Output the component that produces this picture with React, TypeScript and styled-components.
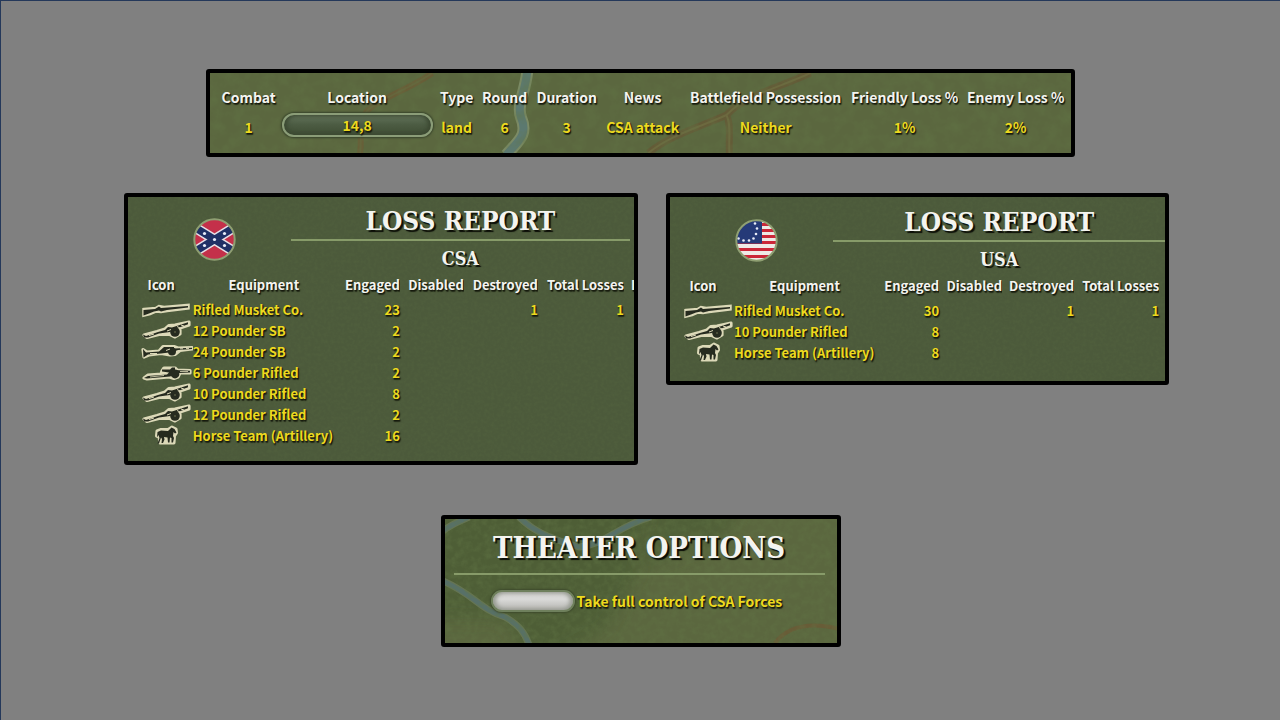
import React from 'react';
import styled, { createGlobalStyle } from 'styled-components';

const GlobalStyle = createGlobalStyle`
  *, *::before, *::after { box-sizing: border-box; }
  body {
    margin: 0;
    background: #808080;
    font-family: 'Noto Sans CJK SC', 'Open Sans', sans-serif;
    font-weight: 700;
    color: #f4f4f0;
  }
`;

const Page = styled.main`
  min-height: 100vh;
  padding: 68px 0 40px;
  border-top: 1px solid #24385a;
  border-left: 1px solid #24385a;
  display: flex;
  flex-direction: column;
  align-items: center;
`;

const Panel = styled.section<{ $map?: boolean }>`
  position: relative;
  overflow: hidden;
  border: 4px solid #000;
  border-radius: 3px;
  background: ${(p) => (p.$map ? '#5b673f' : '#4c5a3b')};
  text-shadow: 1px 1px 1px #14180c, 1px 2px 1px rgba(20, 24, 12, 0.7);
`;

const CombatPanel = styled(Panel)`
  width: 68%;
  min-width: 869px;
  padding: 10px 0 13px 7px;
`;

const Reports = styled.div`
  width: 83%;
  min-width: 1061px;
  margin: 36px 0 50px;
  padding: 0 2px 0 14px;
  display: grid;
  grid-template-columns: 514fr 503fr;
  gap: 28px;
  align-items: start;
`;

const ReportPanel = styled(Panel)<{ $top: number; $bottom: number }>`
  padding: ${(p) => p.$top}px 0 ${(p) => p.$bottom}px 2px;
`;

const OptionsPanel = styled(Panel)`
  width: 400px;
  padding: 12px 12px 30px 9px;
`;

const Backdrop = styled.svg`
  position: absolute;
  inset: 0;
  width: 100%;
  height: 100%;
`;

const Table = styled.table`
  position: relative;
  width: 100%;
  table-layout: fixed;
  border-collapse: collapse;
  white-space: nowrap;
`;

const CombatHead = styled.th`
  height: 27px;
  padding: 0;
  font-size: 14px;
  line-height: 24px;
  text-align: center;
`;

const CombatCell = styled.td`
  height: 30px;
  padding: 4px 0 0;
  font-size: 14px;
  line-height: 24px;
  text-align: center;
  color: #edd91f;
`;

const LocationCell = styled(CombatCell)`
  padding: 0 1px;
`;

const LocationButton = styled.button`
  display: block;
  width: 100%;
  height: 24px;
  padding: 0;
  border: 2px solid #8b9d78;
  border-radius: 12px;
  background: linear-gradient(#63735b, #4d5d44 45%, #3f4d34);
  box-shadow: 0 0 2px 1px #37432a, inset 3px 0 4px #3c4932, inset -3px 0 4px #3c4932;
  font: inherit;
  line-height: 18px;
  color: inherit;
  text-shadow: inherit;
`;

const ReportHeader = styled.header`
  position: relative;
  display: flex;
`;

const Flag = styled.svg`
  flex: none;
  width: 43px;
  height: 43px;
  margin: 13px 55px 0 63px;
`;

const Titles = styled.div<{ $inset: number }>`
  flex: 1;
  margin-right: ${(p) => p.$inset}px;
  text-align: center;
  font-family: 'DejaVu Serif Condensed', 'DejaVu Serif', serif;
  text-shadow: 2px 2px 1px #0b0d06;
`;

const Title = styled.h2`
  margin: 0;
  padding-bottom: 2px;
  border-bottom: 2px solid #879b69;
  font-size: 26px;
  line-height: 32px;
`;

const Side = styled.h3`
  margin: 0;
  padding-top: 4px;
  font-size: 18px;
  line-height: 28px;
`;

const HeadCell = styled.th<{ $align?: string }>`
  height: 26px;
  padding: 0;
  overflow: hidden;
  vertical-align: top;
  font-size: 13px;
  line-height: 24px;
  text-align: ${(p) => p.$align ?? 'right'};
`;

const CutHeadCell = styled(HeadCell)`
  padding-left: 7px;
  text-align: left;
`;

const Cell = styled.td<{ $align?: string }>`
  height: 21px;
  padding: 0;
  font-size: 13px;
  line-height: 21px;
  text-align: ${(p) => p.$align ?? 'right'};
  color: #edd91f;
`;

const UnitIcon = styled.svg`
  display: block;
  width: 54px;
  height: 21px;
  margin-left: 9px;
`;

const OptionsTitle = styled.h2`
  position: relative;
  margin: 0;
  padding-bottom: 8px;
  border-bottom: 2px solid #879b69;
  font-family: 'DejaVu Serif Condensed', 'DejaVu Serif', serif;
  font-size: 29px;
  line-height: 34px;
  text-align: center;
  text-shadow: 2px 2px 1px #0b0d06;
`;

const Option = styled.label`
  position: relative;
  display: flex;
  align-items: center;
  gap: 2px;
  margin: 14px 0 0 37px;
  font-size: 14px;
  line-height: 24px;
  color: #edd91f;
`;

const Toggle = styled.input`
  appearance: none;
  width: 84px;
  height: 22px;
  margin: 0;
  border: 2px solid #6f805d;
  border-radius: 11px;
  background: linear-gradient(#cfcfcd, #dadad8 40%, #b4b4b1);
  box-shadow: 0 0 2px 1px #3d4a2c, inset 3px 0 4px #969a90, inset -3px 0 4px #969a90;
`;

type UnitKind = 'musket' | 'cannonUp' | 'cannonLong' | 'cannonLow' | 'horse';

const CREAM = '#dcd9b8';
const INK = '#262b1f';

const unitShapes: Record<UnitKind, React.ReactNode> = {
  musket: (
    <>
      <path d="M5 10.500L17 9.500L20 7.500L25 8.500L49 6.500V9L28 11.500L22 12.500L17 12L11 14.500L5 16Z" stroke={CREAM} strokeWidth="3.500" fill={CREAM} />
      <path d="M4.500 11L16 10L20 7.500L22 9L49 7V8.500L28 11L22 12.500L20 11.500L15 12.500L10 14.500L4.500 16.500Z" fill={INK} />
    </>
  ),
  cannonUp: (
    <>
      <path d="M5 15L18 11.500L26 9L30 5.500L36 5L50 2V5L41 8L41 14L36 17L31 14.500L20 14.500L8 17.500Z" stroke={CREAM} strokeWidth="3.200" strokeLinejoin="round" fill={CREAM} />
      <path d="M4 14.500L7 16L19 12L26 10L29 7L33 7.500L49 2.300V4.300L39 8L31 12L20 13.500L9 17.500L5 17.500Z" fill={INK} />
      <circle cx="36" cy="12" r="4.800" fill={INK} />
      <path d="M38 6.500l3 1.500M42 5l3 1M10 15.500l5-1.500M28 11l4-1.500" stroke={CREAM} strokeWidth="1" />
      <circle cx="36" cy="12" r="1" fill="#55583f" />
    </>
  ),
  cannonLong: (
    <>
      <path d="M4 8.500L8 11L20 10L24 5.500H35L39 7L53 6.500V8L41 9.500L36 13.500L31 14L22 12.500L10 14L5 16Z" stroke={CREAM} strokeWidth="3.200" strokeLinejoin="round" fill={CREAM} />
      <path d="M4 8L7 11.500L20 10.500L25 6H35V7.500L53 6.800V8L39 9L34 11L22 12.500L9 13.500L4.500 16.500Z" fill={INK} />
      <circle cx="33" cy="10.500" r="4" fill={INK} />
      <path d="M41 7.800h3M47 7.400h3M11 12.500h7M27 9.500l4-1.500" stroke={CREAM} strokeWidth="1" />
    </>
  ),
  cannonLow: (
    <>
      <path d="M5 16L9 13L22 12L23 9L25 6H36L38 8L51 8.500V11H41L39 15L35 16.500L30 15L8 17Z" stroke={CREAM} strokeWidth="3.200" strokeLinejoin="round" fill={CREAM} />
      <path d="M5 16L9 14L28 12.500L30 10.500L23 9.500V7.500H31L33 5.500H36V8L51 8.800V10.500L40 11L31 14.500L8 16.500Z" fill={INK} />
      <circle cx="36" cy="12" r="4.400" fill={INK} />
      <path d="M11 15l14-1.500M41 9.500h8" stroke={CREAM} strokeWidth="0.800" />
    </>
  ),
  horse: (
    <>
      <path d="M18 6L22 4.500L29 4.500L33 2L37 4L37.500 8L35.500 11L35 18H21L20 12L17.500 11Z" stroke={CREAM} strokeWidth="3" strokeLinejoin="round" fill={CREAM} />
      <path d="M18.500 7L22 5.500L29 6L32.500 2.500L35.500 4L37.500 7.500L36 8.500L34.500 7L34 11L35 13L34 17.500H32.500L32.500 13L31 12.500L30.500 17.500H29L28.500 12.500L25 12L25.500 14.500L24 18H22.500L23 14L22 12.500L20 18.500H18.500L20.500 13L19.500 10L18 12.500Z" fill={INK} />
    </>
  ),
};

interface LossRow {
  unit: UnitKind;
  name: string;
  engaged: number;
  destroyed?: number;
  total?: number;
}

const csaRows: LossRow[] = [
  { unit: 'musket', name: 'Rifled Musket Co.', engaged: 23, destroyed: 1, total: 1 },
  { unit: 'cannonUp', name: '12 Pounder SB', engaged: 2 },
  { unit: 'cannonLong', name: '24 Pounder SB', engaged: 2 },
  { unit: 'cannonLow', name: '6 Pounder Rifled', engaged: 2 },
  { unit: 'cannonUp', name: '10 Pounder Rifled', engaged: 8 },
  { unit: 'cannonUp', name: '12 Pounder Rifled', engaged: 2 },
  { unit: 'horse', name: 'Horse Team (Artillery)', engaged: 16 },
];

const usaRows: LossRow[] = [
  { unit: 'musket', name: 'Rifled Musket Co.', engaged: 30, destroyed: 1, total: 1 },
  { unit: 'cannonUp', name: '10 Pounder Rifled', engaged: 8 },
  { unit: 'horse', name: 'Horse Team (Artillery)', engaged: 8 },
];

function Grain({ id, strength, frequency }: { id: string; strength: number; frequency: number }) {
  return (
    <>
      <filter id={id} x="0" y="0" width="100%" height="100%">
        <feTurbulence type="fractalNoise" baseFrequency={frequency} numOctaves="4" seed="4" />
        <feColorMatrix values={`0 0 0 0 0.12  0 0 0 0 0.18  0 0 0 0 0.06  0 ${strength} 0 0 ${-strength * 0.38}`} />
      </filter>
      <rect width="100%" height="100%" filter={`url(#${id})`} />
    </>
  );
}

function CsaFlag() {
  const stars = [[11.5, 15.5], [31.5, 15.5], [21.5, 21.5], [11.5, 27.5], [31.5, 27.5]];
  return (
    <Flag viewBox="0 0 43 43" role="img" aria-label="CSA flag">
      <clipPath id="csa-clip"><circle cx="21.500" cy="21.500" r="20" /></clipPath>
      <g clipPath="url(#csa-clip)">
        <rect width="43" height="43" fill="#c4304a" />
        <path d="M-2 7L45 36M45 7L-2 36" stroke="#e6dfe6" strokeWidth="10.500" />
        <path d="M-2 7L45 36M45 7L-2 36" stroke="#203066" strokeWidth="7.500" />
        {stars.map(([x, y]) => <circle key={`${x}-${y}`} cx={x} cy={y} r="1.600" fill="#e8ecf8" />)}
      </g>
      <circle cx="21.500" cy="21.500" r="20.200" fill="none" stroke="#8f9f72" strokeWidth="2" />
    </Flag>
  );
}

function UsaFlag() {
  const stars = [[20, 4.5], [22, 9.5], [21, 15], [18.5, 19.5], [14, 21.500], [8.5, 21.500], [3.5, 19.5]];
  return (
    <Flag viewBox="0 0 43 43" role="img" aria-label="USA flag">
      <clipPath id="usa-clip"><circle cx="21.500" cy="21.500" r="20" /></clipPath>
      <g clipPath="url(#usa-clip)">
        <rect width="43" height="43" fill="#efe9e6" />
        {[4, 10, 16, 22, 29, 36].map((y) => <rect key={y} y={y} width="43" height="3" fill="#cb2638" />)}
        <rect width="27" height="24.500" fill="#253a78" />
        {stars.map(([x, y]) => <circle key={`${x}-${y}`} cx={x} cy={y} r="1.300" fill="#e8ecf8" />)}
      </g>
      <circle cx="21.500" cy="21.500" r="20.200" fill="none" stroke="#8f9f72" strokeWidth="2" />
    </Flag>
  );
}

interface ReportProps {
  side: string;
  flag: React.ReactNode;
  rows: LossRow[];
  columns: number[];
  top: number;
  bottom: number;
  inset: number;
  more?: string;
}

function LossReport({ side, flag, rows, columns, top, bottom, inset, more }: ReportProps) {
  return (
    <ReportPanel $top={top} $bottom={bottom}>
      <Backdrop aria-hidden="true"><Grain id={`grain-${side}`} strength={0.35} frequency={0.3} /></Backdrop>
      <ReportHeader>
        {flag}
        <Titles $inset={inset}>
          <Title>LOSS REPORT</Title>
          <Side>{side}</Side>
        </Titles>
      </ReportHeader>
      <Table>
        <colgroup>{columns.map((w, i) => <col key={i} width={w} />)}</colgroup>
        <thead>
          <tr>
            <HeadCell $align="center">Icon</HeadCell>
            <HeadCell $align="center">Equipment</HeadCell>
            <HeadCell>Engaged</HeadCell>
            <HeadCell>Disabled</HeadCell>
            <HeadCell>Destroyed</HeadCell>
            <HeadCell>Total Losses</HeadCell>
            {more ? <CutHeadCell>{more}</CutHeadCell> : <HeadCell />}
          </tr>
        </thead>
        <tbody>
          {rows.map((row) => (
            <tr key={row.name}>
              <Cell><UnitIcon viewBox="0 0 54 21" fill="none" aria-hidden="true">{unitShapes[row.unit]}</UnitIcon></Cell>
              <Cell $align="left">{row.name}</Cell>
              <Cell>{row.engaged}</Cell>
              <Cell />
              <Cell>{row.destroyed}</Cell>
              <Cell>{row.total}</Cell>
              <Cell />
            </tr>
          ))}
        </tbody>
      </Table>
    </ReportPanel>
  );
}

const combatColumns = [64, 153, 46, 50, 74, 78, 168, 110, 112];
const combatHeads = ['Combat', 'Location', 'Type', 'Round', 'Duration', 'News', 'Battlefield Possession', 'Friendly Loss %', 'Enemy Loss %'];
const combatValues = ['land', '6', '3', 'CSA attack', 'Neither', '1%', '2%'];

export default function App() {
  return (
    <>
      <GlobalStyle />
      <Page>
        <CombatPanel $map>
          <Backdrop viewBox="0 0 861 80" preserveAspectRatio="none" fill="none" aria-hidden="true">
            <path d="M222 0C200 16 168 26 157 38C148 48 152 62 150 80" stroke="#6d5a35" strokeWidth="6" opacity="0.700" />
            <path d="M222 0C200 16 168 26 157 38C148 48 152 62 150 80" stroke="#66653c" strokeWidth="2" />
            <path d="M600 0C560 18 535 22 516 42C490 54 460 62 438 80M516 42C521 52 518 64 519 80" stroke="#665734" strokeWidth="7" opacity="0.700" />
            <path d="M600 0C560 18 535 22 516 42C490 54 460 62 438 80M516 42C521 52 518 64 519 80" stroke="#6c693f" strokeWidth="2" />
            <path d="M317 -2C315 20 306 32 311 45C318 62 308 68 296 82" stroke="#7c8b66" strokeWidth="12" />
            <path d="M317 -2C315 20 306 32 311 45C318 62 308 68 296 82" stroke="#5c7970" strokeWidth="8" />
            <Grain id="grain-combat" strength={0.9} frequency={0.08} />
          </Backdrop>
          <Table>
            <colgroup>{combatColumns.map((w, i) => <col key={i} width={w} />)}</colgroup>
            <thead>
              <tr>{combatHeads.map((h) => <CombatHead key={h}>{h}</CombatHead>)}</tr>
            </thead>
            <tbody>
              <tr>
                <CombatCell>1</CombatCell>
                <LocationCell><LocationButton type="button">14,8</LocationButton></LocationCell>
                {combatValues.map((v) => <CombatCell key={v}>{v}</CombatCell>)}
              </tr>
            </tbody>
          </Table>
        </CombatPanel>

        <Reports>
          <LossReport side="CSA" flag={<CsaFlag />} rows={csaRows} columns={[63, 142, 65, 64, 74, 86, 10]} top={8} bottom={15} inset={4} more="I" />
          <LossReport side="USA" flag={<UsaFlag />} rows={usaRows} columns={[62, 141, 64, 63, 72, 85, 6]} top={9} bottom={18} inset={0} />
        </Reports>

        <OptionsPanel $map>
          <Backdrop viewBox="0 0 392 124" preserveAspectRatio="none" fill="none" aria-hidden="true">
            <filter id="soften"><feGaussianBlur stdDeviation="8" /></filter>
            <path d="M-20 -20H205L190 60L160 110L90 150L60 100H-20Z" fill="#43572f" opacity="0.500" filter="url(#soften)" />
            <path d="M205 -20H300L280 20L196 50Z" fill="#43572f" opacity="0.400" filter="url(#soften)" />
            <path d="M-2 12C8 4 16 2 24 -2M74 -2C86 10 100 18 134 28C160 26 170 8 206 -2M-2 62C30 76 34 90 60 98C74 106 80 114 84 126" stroke="#748468" strokeWidth="7" opacity="0.600" />
            <path d="M-2 12C8 4 16 2 24 -2M74 -2C86 10 100 18 134 28C160 26 170 8 206 -2M-2 62C30 76 34 90 60 98C74 106 80 114 84 126" stroke="#577068" strokeWidth="4.500" />
            <path d="M330 124C345 105 370 104 394 110" stroke="#6d5834" strokeWidth="4" opacity="0.700" />
            <Grain id="grain-options" strength={0.9} frequency={0.15} />
          </Backdrop>
          <OptionsTitle>THEATER OPTIONS</OptionsTitle>
          <Option>
            <Toggle type="checkbox" />
            Take full control of CSA Forces
          </Option>
        </OptionsPanel>
      </Page>
    </>
  );
}
